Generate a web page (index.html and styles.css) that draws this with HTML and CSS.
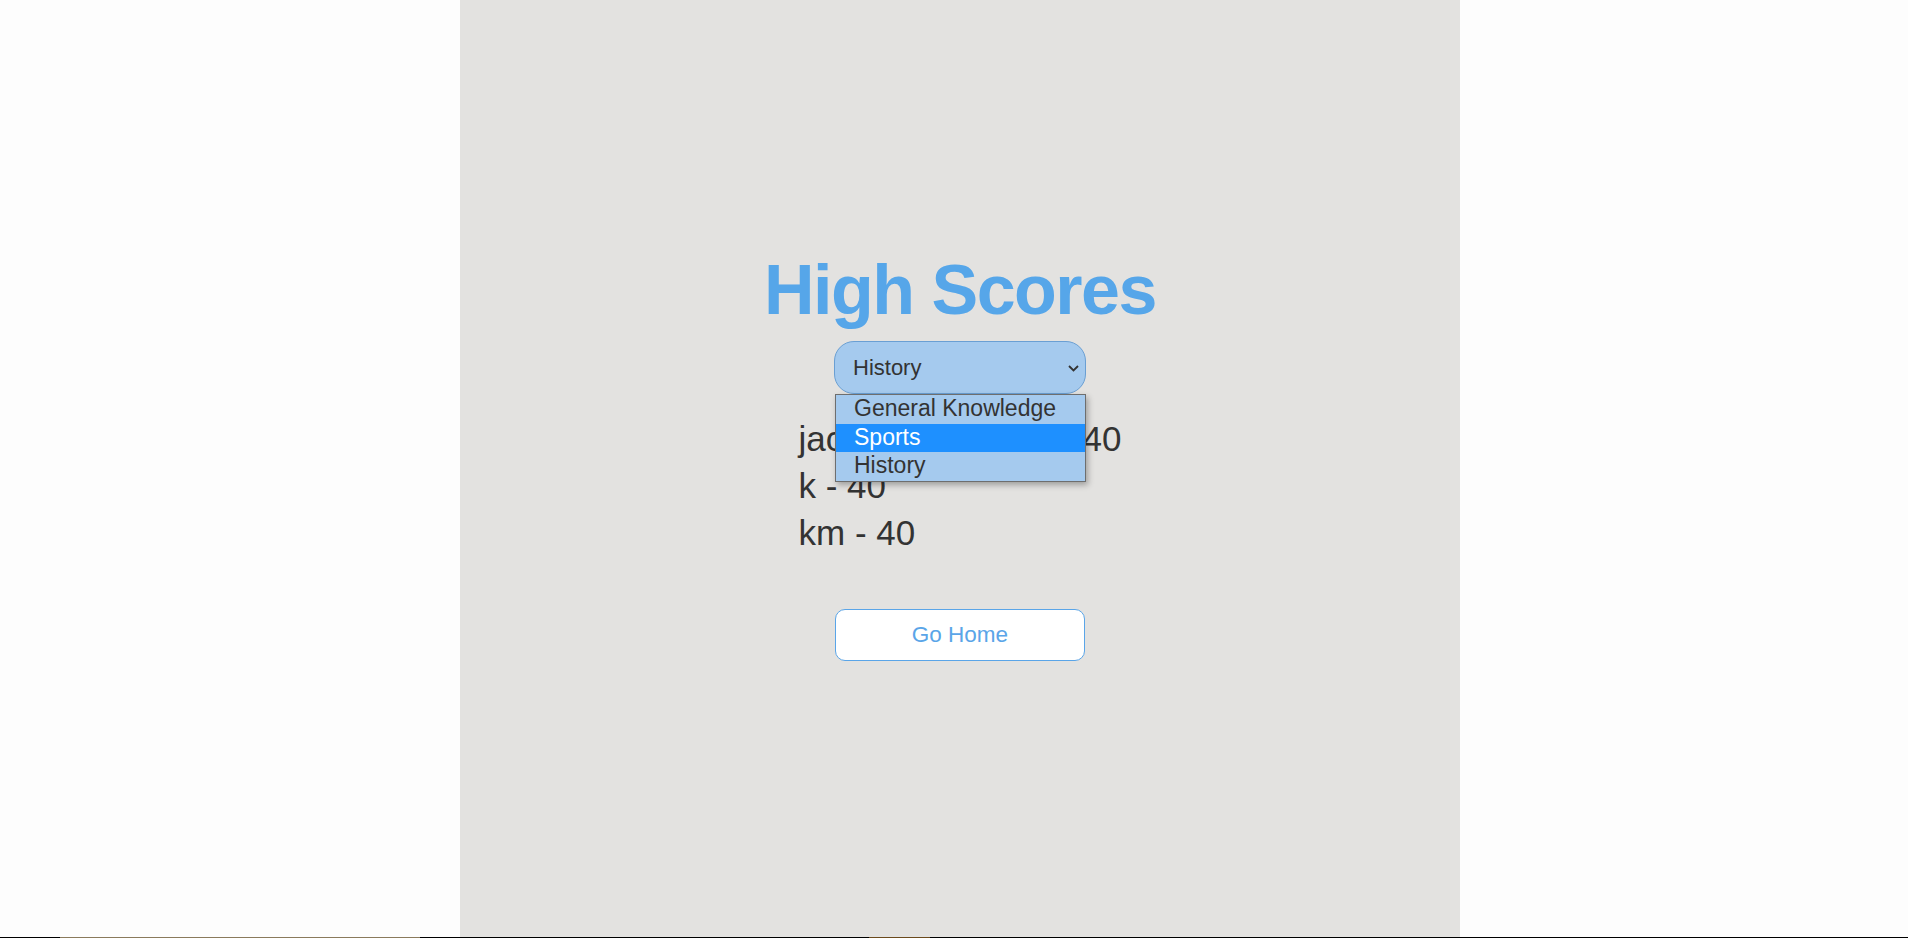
FILE: index.html
```html
<!DOCTYPE html>
<html lang="en">
<head>
<meta charset="utf-8">
<title>High Scores</title>
<link rel="stylesheet" href="styles.css">
</head>
<body>
<div class="page">
  <div class="main">
    <div class="column">
      <h1 class="title">High Scores</h1>
      <div class="select-wrap">
        <select class="category">
          <option>General Knowledge</option>
          <option>Sports</option>
          <option selected>History</option>
        </select>
        <svg class="chevron" width="11" height="7" viewBox="0 0 11 7"><path d="M1 1 L5.5 5.5 L10 1" fill="none" stroke="#333" stroke-width="1.8"/></svg>
        <div class="dropdown">
          <div class="opt">General Knowledge</div>
          <div class="opt active">Sports</div>
          <div class="opt">History</div>
        </div>
      </div>
      <ul class="scores">
        <li>jack_attack2024 - 40</li>
        <li>k - 40</li>
        <li>km - 40</li>
      </ul>
      <button class="home">Go Home</button>
    </div>
  </div>
  <div class="taskbar">
    <span class="tb-a"></span>
    <span class="tb-b"></span>
    <span class="tb-c"></span>
    <span class="tb-d"></span>
    <span class="tb-e"></span>
  </div>
</div>
</body>
</html>
```
FILE: styles.css
```css
html, body {
  margin: 0;
  padding: 0;
}
body {
  background: #fdfdfd;
  font-family: "Liberation Sans", Arial, sans-serif;
  color: #333;
}
.page {
  height: 938px;
  display: flex;
  flex-direction: column;
  overflow: hidden;
}
.main {
  flex: 1;
  display: flex;
}
.column {
  margin-left: 460px;
  width: 1000px;
  background: #e3e2e0;
  display: flex;
  flex-direction: column;
  align-items: center;
  padding-top: 250px;
  box-sizing: border-box;
}
.title {
  margin: 0;
  font-size: 70px;
  line-height: 80px;
  font-weight: bold;
  color: #56a6e9;
  letter-spacing: -1.5px;
}
.select-wrap {
  position: relative;
  margin-top: 11px;
  width: 252px;
  height: 53px;
}
.category {
  appearance: none;
  -webkit-appearance: none;
  width: 252px;
  height: 53px;
  box-sizing: border-box;
  border: 1px solid #6a9fd3;
  border-radius: 20px;
  background: #a5caee;
  color: #333;
  font-family: "Liberation Sans", Arial, sans-serif;
  font-size: 22px;
  padding: 0 18px;
  outline: none;
}
.chevron {
  position: absolute;
  right: 7px;
  top: 24px;
}
.dropdown {
  position: absolute;
  top: 53px;
  left: 1px;
  width: 251px;
  box-sizing: border-box;
  border: 1px solid #6e6e6e;
  background: #a5caee;
  box-shadow: 2px 3px 6px rgba(0, 0, 0, 0.3);
  z-index: 5;
}
.opt {
  height: 29px;
  line-height: 27px;
  padding-left: 18px;
  font-size: 23px;
  color: #333;
}
.opt.active {
  height: 28px;
  background: #1e90ff;
  color: #fff;
}
.scores {
  list-style: none;
  margin: 21px 0 0;
  padding: 0;
  font-size: 35px;
  line-height: 47px;
  color: #333;
  width: fit-content;
}
.home {
  margin-top: 53px;
  width: 250px;
  height: 52px;
  border: 1px solid #5aa5e8;
  border-radius: 10px;
  background: #fff;
  color: #5aa5e8;
  font-family: "Liberation Sans", Arial, sans-serif;
  font-size: 22.5px;
  padding: 0;
}
.taskbar {
  height: 1px;
  display: flex;
  background: #000;
}
.taskbar span {
  display: block;
  height: 1px;
}
.tb-a { width: 60px; background: #000; }
.tb-b { width: 360px; background: #8a7a5c; }
.tb-c { width: 449px; background: #000; }
.tb-d { width: 61px; background: #6b4a1c; }
.tb-e { flex: 1; background: #000; }
```
